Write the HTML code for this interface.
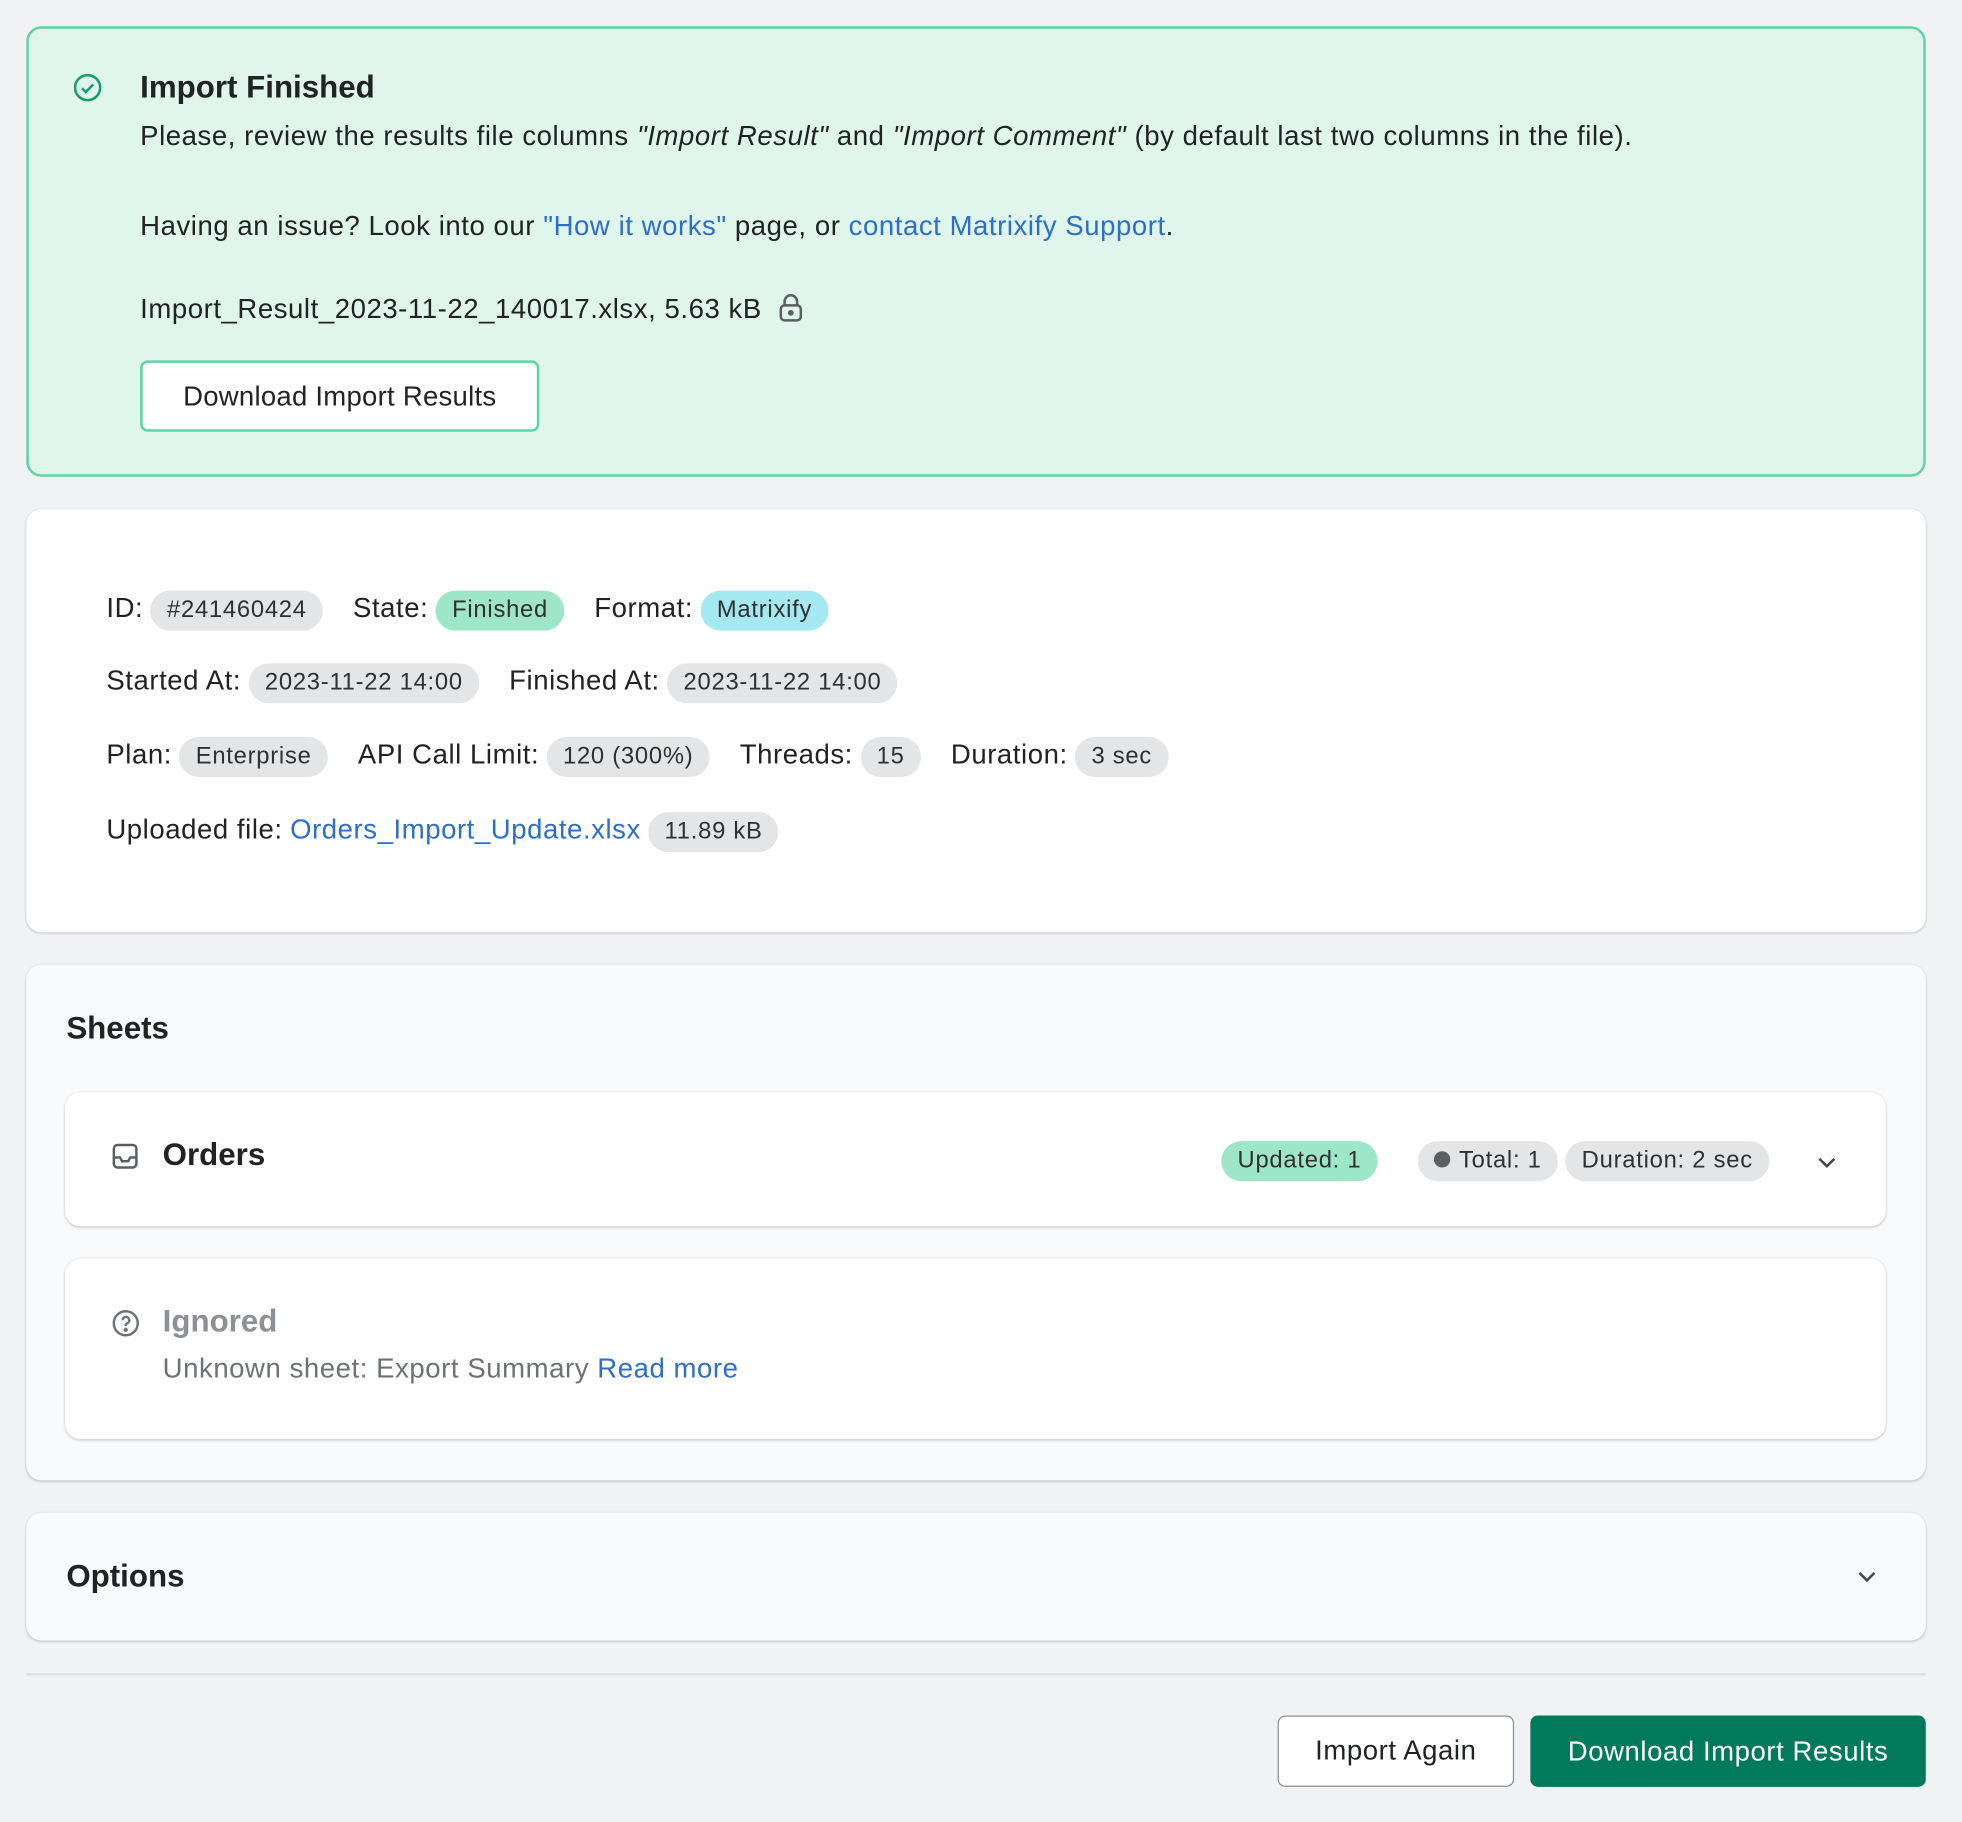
<!DOCTYPE html>
<html><head><meta charset="utf-8"><style>
*{box-sizing:border-box;margin:0;padding:0}
html,body{width:1962px;height:1822px;overflow:hidden;background:#f1f2f4}
#w{position:absolute;left:0;top:0;width:1568px;height:1456px;transform:scale(1.2513);transform-origin:0 0;font-family:"Liberation Sans",sans-serif;color:#202223;font-size:22px;letter-spacing:.45px}
.abs{position:absolute}
a{color:#2c6ecb;text-decoration:none}
.b{display:inline-block;background:#e4e5e7;border-radius:16px;padding:4px 13px;font-size:19px;line-height:24px;color:#303030;letter-spacing:.6px}
.card{position:absolute;border-radius:12px;box-shadow:0 1px 2px rgba(0,0,0,.15),0 0 0 1px rgba(0,0,0,.03)}
.row{position:absolute;left:85px;white-space:nowrap}
.row span.l{margin-right:6px}
.row .b{margin-right:24px}
h{font-weight:bold;letter-spacing:0}
</style></head><body><div id="w">
<div class="abs" style="left:21px;top:21px;width:1518px;height:360px;background:#e0f6ec;border:2px solid #5ed3a6;border-radius:12px"></div>
<svg class="abs" style="left:58px;top:58px" width="24" height="24" viewBox="0 0 24 24" fill="none" stroke="#119e6b" stroke-width="2"><circle cx="12" cy="12" r="10"/><path d="M7.5 12.5l3 3 6-6"/></svg>
<div class="abs" style="left:112px;top:56px;font-size:25px;font-weight:bold;letter-spacing:0">Import Finished</div>
<div class="abs" style="left:112px;top:96px;white-space:nowrap">Please, review the results file columns <i>"Import Result"</i> and <i>"Import Comment"</i> (by default last two columns in the file).</div>
<div class="abs" style="left:112px;top:168px;white-space:nowrap">Having an issue? Look into our <a>"How it works"</a> page, or <a>contact Matrixify Support</a>.</div>
<div class="abs" style="left:112px;top:234px;white-space:nowrap">Import_Result_2023-11-22_140017.xlsx, 5.63 kB <svg style="vertical-align:-4px;margin-left:6px" width="22" height="24" viewBox="0 0 22 24" fill="none" stroke="#5c5f62" stroke-width="2"><path d="M6 10V7a5 5 0 0 1 10 0v3"/><rect x="3" y="10" width="16" height="12" rx="3"/><circle cx="11" cy="16" r="1.3" fill="#5c5f62"/></svg></div>
<div class="abs" style="left:112px;top:288px;width:319px;height:57px;background:#fff;border:2px solid #5ed3a6;border-radius:6px;text-align:center;line-height:53px;font-size:22px;letter-spacing:.2px">Download Import Results</div>

<div class="card" style="left:21px;top:407px;width:1518px;height:338px;background:#fff"></div>
<div class="row" style="top:472px">
<span class="l">ID:</span><span class="b">#241460424</span><span class="l">State:</span><span class="b" style="background:#9ee6c8">Finished</span><span class="l">Format:</span><span class="b" style="background:#a4e8f2">Matrixify</span></div>
<div class="row" style="top:530px"><span class="l">Started At:</span><span class="b">2023-11-22 14:00</span><span class="l">Finished At:</span><span class="b">2023-11-22 14:00</span></div>
<div class="row" style="top:589px"><span class="l">Plan:</span><span class="b">Enterprise</span><span class="l">API Call Limit:</span><span class="b">120 (300%)</span><span class="l">Threads:</span><span class="b">15</span><span class="l">Duration:</span><span class="b">3 sec</span></div>
<div class="row" style="top:649px"><span class="l">Uploaded file:</span><a style="margin-right:6px">Orders_Import_Update.xlsx</a><span class="b">11.89 kB</span></div>

<div class="card" style="left:21px;top:771px;width:1518px;height:412px;background:#f8fafc"></div>
<div class="abs" style="left:53px;top:808px;font-size:25px;font-weight:bold;letter-spacing:0">Sheets</div>
<div class="card" style="left:52px;top:873px;width:1455px;height:107px;background:#fff"></div>
<svg class="abs" style="left:89px;top:913px" width="22" height="22" viewBox="0 0 22 22" fill="none" stroke="#5c5f62" stroke-width="2"><rect x="2" y="2" width="18" height="18" rx="3"/><path d="M2 12h5l1.5 3h5L15 12h5"/></svg>
<div class="abs" style="left:130px;top:909px;font-size:25px;font-weight:bold;letter-spacing:0">Orders</div>
<div class="abs" style="left:976px;top:912px;white-space:nowrap"><span class="b" style="background:#9ee6c8;margin-right:32px">Updated: 1</span><span class="b" style="margin-right:6px"><span style="display:inline-block;width:13px;height:13px;border-radius:50%;background:#5c5f62;margin-right:7px"></span>Total: 1</span><span class="b">Duration: 2 sec</span></div>
<svg class="abs" style="left:1450px;top:919px" width="20" height="20" viewBox="0 0 20 20" fill="none" stroke="#444" stroke-width="2"><path d="M4 7l6 6 6-6"/></svg>
<div class="card" style="left:52px;top:1006px;width:1455px;height:144px;background:#fff"></div>
<svg class="abs" style="left:89px;top:1046px" width="23" height="23" viewBox="0 0 24 24" fill="none" stroke="#6d7175" stroke-width="2"><circle cx="12" cy="12" r="10"/><path d="M9.3 9.5a2.8 2.8 0 1 1 3.8 2.6c-.7.3-1.1.9-1.1 1.6v.6"/><circle cx="12" cy="17.5" r=".8" fill="#6d7175"/></svg>
<div class="abs" style="left:130px;top:1042px;font-size:25px;font-weight:bold;color:#8c9196;letter-spacing:0">Ignored</div>
<div class="abs" style="left:130px;top:1081px;color:#6d7175;white-space:nowrap">Unknown sheet: Export Summary <a>Read more</a></div>

<div class="card" style="left:21px;top:1209px;width:1518px;height:102px;background:#f8fafc"></div>
<div class="abs" style="left:53px;top:1246px;font-size:25px;font-weight:bold;letter-spacing:0">Options</div>
<svg class="abs" style="left:1482px;top:1250px" width="20" height="20" viewBox="0 0 20 20" fill="none" stroke="#444" stroke-width="2"><path d="M4 7l6 6 6-6"/></svg>
<div class="abs" style="left:21px;top:1337px;width:1518px;height:2px;background:#e1e3e5"></div>
<div class="abs" style="left:1021px;top:1371px;width:189px;height:57px;background:#fff;border:1.5px solid #8c9196;border-radius:6px;text-align:center;line-height:54px;font-size:22px">Import Again</div>
<div class="abs" style="left:1223px;top:1371px;width:316px;height:57px;background:#007a5a;border-radius:6px;text-align:center;line-height:57px;font-size:22px;color:#fff">Download Import Results</div>
</div></body></html>
